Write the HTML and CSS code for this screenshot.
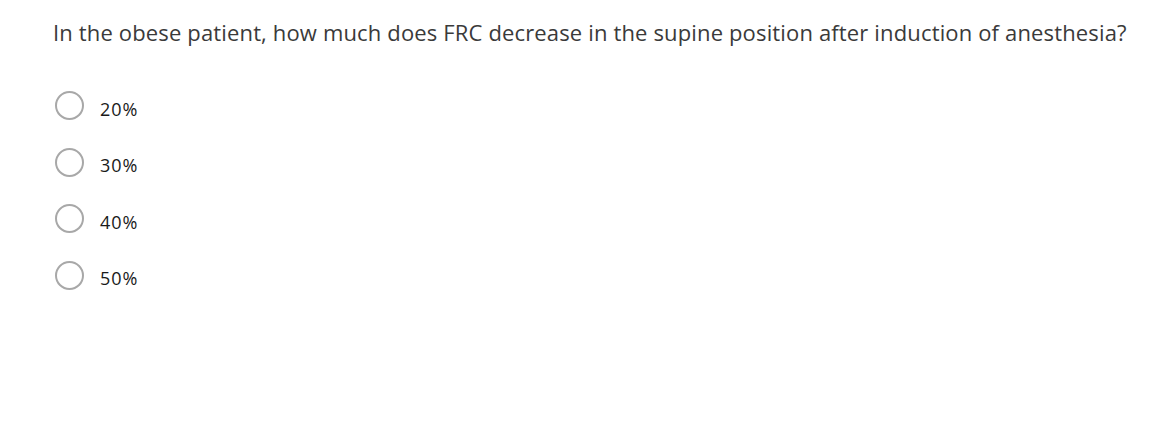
FILE: index.html
```html
<!DOCTYPE html>
<html>
<head>
<meta charset="utf-8">
<link rel="stylesheet" href="styles.css">
</head>
<body>
<div class="question">
  <p class="prompt">In the obese patient, how much does FRC decrease in the supine position after induction of anesthesia?</p>
  <ul class="options">
    <li class="option"><span class="radio"></span><span class="label">20%</span></li>
    <li class="option"><span class="radio"></span><span class="label">30%</span></li>
    <li class="option"><span class="radio"></span><span class="label">40%</span></li>
    <li class="option"><span class="radio"></span><span class="label">50%</span></li>
  </ul>
</div>
</body>
</html>
```
FILE: styles.css
```css
html, body {
  margin: 0;
  padding: 0;
  background: #ffffff;
}
.question {
  padding: 17px 0 0 53px;
  font-family: "Open Sans", "Noto Sans", sans-serif;
}
.prompt {
  margin: 0;
  font-size: 22px;
  line-height: 30px;
  letter-spacing: 0.15px;
  color: #3a3a3a;
}
.options {
  list-style: none;
  margin: 0;
  padding: 0;
  margin-top: 44px;
  display: flex;
  flex-direction: column;
  gap: 27.5px;
}
.option {
  display: flex;
  align-items: center;
  height: 29px;
  padding-left: 2px;
}
.radio {
  width: 25px;
  height: 25px;
  border: 2px solid #a8a8a8;
  border-radius: 50%;
  box-sizing: content-box;
  flex: none;
}
.label {
  margin-left: 16px;
  margin-top: 6px;
  font-size: 18px;
  letter-spacing: 1px;
  color: #1a1a1a;
}
```
